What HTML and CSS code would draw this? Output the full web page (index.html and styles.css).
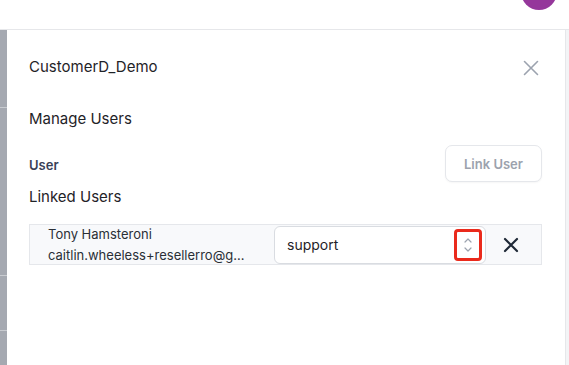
FILE: index.html
```html
<!DOCTYPE html>
<html>
<head>
<meta charset="utf-8">
<link rel="stylesheet" href="styles.css">
</head>
<body>
<div class="topbar">
  <div class="avatar"></div>
</div>
<div class="main">
  <div class="leftstrip">
    <div class="ls-a"></div>
    <div class="ls-b"></div>
    <div class="ls-c"></div>
    <div class="ls-d"></div>
  </div>
  <div class="panel">
    <div class="header">
      <div class="title">CustomerD_Demo</div>
      <svg class="close" width="16" height="16" viewBox="0 0 16 16"><path d="M1.5 1.5 L14.5 14.5 M14.5 1.5 L1.5 14.5" stroke="#9ca3af" stroke-width="1.6" fill="none" stroke-linecap="round"/></svg>
    </div>
    <div class="subtitle">Manage Users</div>
    <div class="user-row">
      <div class="label">User</div>
      <button class="link-btn">Link User</button>
    </div>
    <div class="linked">Linked Users</div>
    <div class="item">
      <div class="person">
        <div class="name">Tony Hamsteroni</div>
        <div class="email">caitlin.wheeless+resellerro@gmail.com</div>
      </div>
      <div class="select">
        <span class="sel-text">support</span>
        <span class="chev-box">
          <svg width="10" height="18" viewBox="0 0 10 18"><path d="M2 6 L5 3 L8 6 M2 12 L5 15 L8 12" stroke="#9ca3af" stroke-width="1.2" fill="none" stroke-linecap="round" stroke-linejoin="round"/></svg>
        </span>
      </div>
      <svg class="remove" width="16" height="16" viewBox="0 0 16 16"><path d="M2 2 L14 14 M14 2 L2 14" stroke="#1f2937" stroke-width="2.2" fill="none" stroke-linecap="round"/></svg>
    </div>
  </div>
  <div class="rightstrip"></div>
</div>
</body>
</html>
```
FILE: styles.css
```css
html, body {
  margin: 0;
  padding: 0;
  background: #ffffff;
}
body {
  width: 569px;
  height: 365px;
  overflow: hidden;
  font-family: "Inter", "Noto Sans", sans-serif;
  color: #1f2328;
}
.topbar {
  height: 29px;
  border-bottom: 1px solid #e6e7ea;
  position: relative;
}
.avatar {
  position: absolute;
  left: 521px;
  top: -26px;
  width: 36px;
  height: 36px;
  border-radius: 50%;
  background: #95379b;
}
.main {
  display: flex;
  height: 335px;
}
.leftstrip {
  width: 7px;
  background: #a5a9b1;
  display: flex;
  flex-direction: column;
}
.ls-a { height: 77px; border-bottom: 1px solid #c9ccd1; }
.ls-b { height: 167px; border-bottom: 1px solid #c9ccd1; }
.ls-c { height: 54px; border-bottom: 1px solid #c9ccd1; }
.ls-d { flex: 1; }
.panel {
  flex: 1;
  padding: 0 23px 0 22px;
  border-right: 1px solid #e6e7ea;
}
.rightstrip {
  width: 3px;
  background: #f3f4f6;
}
.header {
  display: flex;
  justify-content: space-between;
  align-items: center;
  height: 72px;
}
.title {
  font-size: 15px;
}
.close {
  margin-right: 3px;
  margin-top: 4px;
}
.subtitle {
  font-size: 15px;
  line-height: 20px;
  margin-top: 7px;
}
.user-row {
  display: flex;
  justify-content: space-between;
  align-items: center;
  margin-top: 16px;
}
.label {
  font-size: 13px;
  font-weight: 600;
  color: #3a4157;
  margin-top: 3px;
}
.link-btn {
  width: 97px;
  height: 37px;
  border: 1px solid #e5e7eb;
  border-radius: 7px;
  background: #ffffff;
  color: #9ca2ad;
  font-family: "Inter", "Noto Sans", sans-serif;
  font-size: 13px;
  font-weight: 600;
  box-shadow: 0 1px 2px rgba(0,0,0,0.04);
}
.linked {
  font-size: 15px;
  line-height: 20px;
  margin-top: 5px;
}
.item {
  margin-top: 17px;
  height: 41px;
  box-sizing: border-box;
  border: 1px solid #e5e7eb;
  background: #f8f9fb;
  display: flex;
  align-items: center;
  padding-left: 18px;
}
.person {
  width: 207px;
  font-size: 13px;
  line-height: 21px;
  color: #2a2f36;
}
.email {
  overflow: hidden;
  white-space: nowrap;
  text-overflow: ellipsis;
}
.select {
  margin-left: 19px;
  width: 212px;
  height: 38px;
  box-sizing: border-box;
  border: 1px solid #d9dce1;
  border-radius: 6px;
  background: #ffffff;
  display: flex;
  align-items: center;
  justify-content: space-between;
  padding-left: 12px;
  padding-right: 3px;
}
.sel-text {
  font-size: 14px;
  color: #1f2328;
}
.chev-box {
  width: 28px;
  height: 32px;
  box-sizing: border-box;
  border: 3px solid #ea2a1c;
  border-radius: 4px;
  display: flex;
  align-items: center;
  justify-content: center;
  background: #ffffff;
}
.remove {
  margin-left: 17px;
}
```
